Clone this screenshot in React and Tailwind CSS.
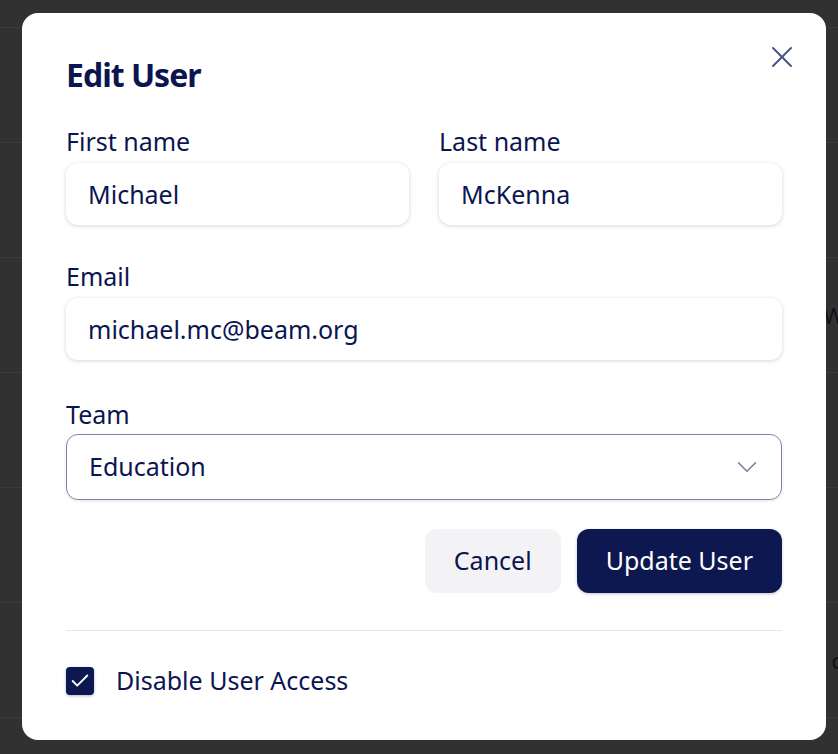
import React, { useState } from "react";
import { X, ChevronDown, Check } from "lucide-react";

const Field = ({ label, value, className }) => {
  return (
    <div className={"flex flex-col " + (className || "")}>
      <label className="text-[25px] leading-[30px] text-[#0b1550] mb-[7px]">{label}</label>
      <input
        defaultValue={value}
        className="h-[62px] w-full rounded-[12px] bg-white px-[22px] text-[25px] text-[#0b1550] shadow-[0_1px_4px_rgba(16,24,64,0.18)] outline-none"
      />
    </div>
  );
};

const App = () => {
  const [disabled, setDisabled] = useState(true);

  return (
    <div className="h-[754px] w-[838px] overflow-hidden bg-[#313131] font-['Noto_Sans',sans-serif] relative">
      {/* page behind the overlay */}
      <div className="flex flex-col pt-[27px]">
        <div className="h-[115px] border-t border-[#3b3b3b]"></div>
        <div className="h-[115px] border-t border-[#3b3b3b]"></div>
        <div className="h-[115px] border-t border-[#3b3b3b] flex justify-end items-center pr-0">
          <span className="text-[22px] text-[#111] mr-[-6px]">W</span>
        </div>
        <div className="h-[115px] border-t border-[#3b3b3b]"></div>
        <div className="h-[115px] border-t border-[#3b3b3b]"></div>
        <div className="h-[115px] border-t border-[#3b3b3b] flex justify-end items-center">
          <span className="text-[22px] text-[#111] mr-[-4px]">c</span>
        </div>
        <div className="h-[115px] border-t border-[#3b3b3b]"></div>
      </div>

      <div className="absolute left-[22px] top-[13px] w-[804px] h-[727px] rounded-[16px] bg-white px-[44px] pt-[40px]">
        <div className="flex items-start justify-between">
          <h2 className="text-[32px] font-bold leading-[44px] tracking-[-1px] text-[#0b1550]">Edit User</h2>
          <button className="mt-[-14px] mr-[-18px] text-[#4b5382]">
            <X size={36} strokeWidth={1.3} />
          </button>
        </div>

        <div className="mt-[29px] grid grid-cols-2 gap-x-[30px]">
          <Field label="First name" value="Michael" />
          <Field label="Last name" value="McKenna" />
        </div>

        <Field label="Email" value="michael.mc@beam.org" className="mt-[36px]" />

        <div className="mt-[39px] flex flex-col">
          <label className="text-[25px] leading-[30px] text-[#0b1550] mb-[5px]">Team</label>
          <div className="flex h-[66px] items-center justify-between rounded-[12px] border border-[#7f84a4] pl-[22px] pr-[17px] shadow-[0_1px_3px_rgba(16,24,64,0.12)]">
            <span className="text-[25px] text-[#0b1550]">Education</span>
            <ChevronDown size={34} strokeWidth={1.2} className="text-[#7d83a8]" />
          </div>
        </div>

        <div className="mt-[29px] flex justify-end gap-[16px]">
          <button className="h-[64px] rounded-[12px] bg-[#f3f3f6] px-[29px] text-[25px] text-[#0b1550]">Cancel</button>
          <button className="h-[64px] rounded-[12px] bg-[#0d1850] px-[29px] text-[25px] text-white shadow-[0_1px_3px_rgba(16,24,64,0.25)]">
            Update User
          </button>
        </div>

        <div className="mt-[37px] h-px bg-[#e6e8f0]"></div>

        <label className="mt-[31px] flex items-center gap-[22px] cursor-pointer">
          <span
            onClick={() => setDisabled(!disabled)}
            className="flex h-[28px] w-[28px] items-center justify-center rounded-[4px] bg-[#0d1850] text-white shadow-[0_1px_3px_rgba(16,24,64,0.3)]"
          >
            {disabled && <Check size={22} strokeWidth={2} />}
          </span>
          <span className="text-[25px] text-[#0b1550]">Disable User Access</span>
        </label>
      </div>
    </div>
  );
};

export default App;
